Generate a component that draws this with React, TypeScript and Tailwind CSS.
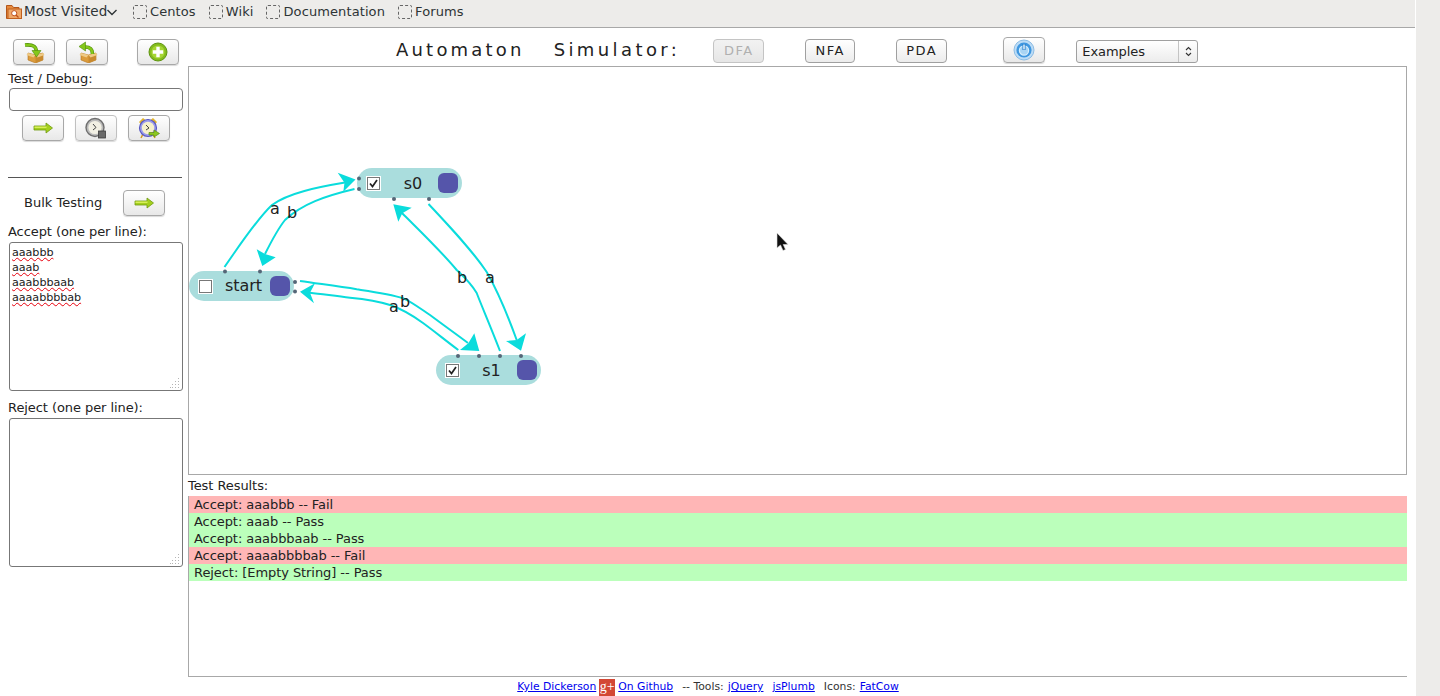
import type { ReactNode } from "react";

const bookmarks = ["Centos", "Wiki", "Documentation", "Forums"];

const results = [
  { text: "Accept: aaabbb -- Fail", pass: false },
  { text: "Accept: aaab -- Pass", pass: true },
  { text: "Accept: aaabbbaab -- Pass", pass: true },
  { text: "Accept: aaaabbbbab -- Fail", pass: false },
  { text: "Reject: [Empty String] -- Pass", pass: true },
];

const acceptLines = ["aaabbb", "aaab", "aaabbbaab", "aaaabbbbab"];

function IconButton({ children, className = "" }: { children: ReactNode; className?: string }) {
  return (
    <button className={`flex h-[26px] w-[42px] items-center justify-center rounded-[4px] border border-[#a8a8a8] bg-gradient-to-b from-white to-[#e8e8e8] shadow-[0_1px_1px_rgba(0,0,0,0.15)] ${className}`}>
      {children}
    </button>
  );
}

function TextButton({ label, className = "", disabled = false }: { label: string; className?: string; disabled?: boolean }) {
  return (
    <button
      className={`flex h-[24px] items-center justify-center rounded-[4px] border bg-gradient-to-b text-[13px] tracking-[1.5px] ${
        disabled ? "border-[#c4c4c4] from-[#f2f2f2] to-[#e6e6e6] text-[#b0b0b0]" : "border-[#a0a0a0] from-white to-[#ececec] text-[#222]"
      } ${className}`}
    >
      {label}
    </button>
  );
}

function BoxIcon({ flip = false }: { flip?: boolean }) {
  return (
    <svg width="22" height="22" viewBox="0 0 22 22">
      <path d="M5 12 L12.5 14 L20 12 L20 19 L12.5 22 L5 19 Z" fill="#dc9c3c" stroke="#b4741e" strokeWidth="0.6" />
      <path d="M12.5 14 L20 12 L20 19 L12.5 22 Z" fill="#c98a2e" />
      <path d="M5 12 L3.5 14 L10.5 16.5 L12.5 14 Z" fill="#eeca86" />
      <path d="M20 12 L21.5 14 L14.5 16.5 L12.5 14 Z" fill="#eeca86" />
      {flip ? (
        <g>
          <path d="M16.5 13 C16.5 8 14 6 9 6" fill="none" stroke="#4f8c0a" strokeWidth="3.6" />
          <path d="M16.5 13 C16.5 8 14 6 9 6" fill="none" stroke="#84c81a" strokeWidth="2.4" />
          <path d="M3 5.5 L9.5 1 L9.5 10 Z" fill="#84c81a" stroke="#4f8c0a" strokeWidth="0.6" />
        </g>
      ) : (
        <g>
          <path d="M2 4 C8 3.5 13 4 13.5 10" fill="none" stroke="#4f8c0a" strokeWidth="3.6" />
          <path d="M2 4 C8 3.5 13 4 13.5 10" fill="none" stroke="#84c81a" strokeWidth="2.4" />
          <path d="M13.5 16 L9 9.5 L18 9.5 Z" fill="#84c81a" stroke="#4f8c0a" strokeWidth="0.6" />
        </g>
      )}
    </svg>
  );
}

function PlusIcon() {
  return (
    <svg width="20" height="20" viewBox="0 0 20 20">
      <circle cx="10" cy="10" r="9" fill="#84bc1c" stroke="#5e9410" strokeWidth="1" />
      <circle cx="10" cy="10" r="6.6" fill="#a6d634" />
      <path d="M8.3 4.8 H11.7 V8.3 H15.2 V11.7 H11.7 V15.2 H8.3 V11.7 H4.8 V8.3 H8.3 Z" fill="#fff" />
    </svg>
  );
}

function ArrowIcon() {
  return (
    <svg width="20" height="12" viewBox="0 0 20 12">
      <path d="M1 4 H13 V1 L19.5 6 L13 11 V8 H1 Z" fill="#a4d01e" stroke="#6f9a10" strokeWidth="0.8" />
      <path d="M1.5 4.5 H13.5 V6 H1.5 Z" fill="#d8ee5a" />
    </svg>
  );
}

function StopClockIcon() {
  return (
    <svg width="22" height="22" viewBox="0 0 22 22">
      <circle cx="10" cy="10.5" r="9" fill="#bcbcbc" stroke="#6e6e6e" strokeWidth="1.4" />
      <circle cx="10" cy="10.5" r="6.6" fill="#f2f0e4" />
      <path d="M8 7 L11 10.5 L8 13" fill="none" stroke="#444" strokeWidth="1" />
      <rect x="13.5" y="14" width="7" height="7" fill="#6a6a6a" stroke="#3c3c3c" strokeWidth="0.8" />
    </svg>
  );
}

function AlarmClockIcon() {
  return (
    <svg width="22" height="22" viewBox="0 0 22 22">
      <path d="M1 5 L5 1 L7.5 3 L3 7.5 Z" fill="#e2b42a" />
      <path d="M19 5 L15 1 L12.5 3 L17 7.5 Z" fill="#e2b42a" />
      <path d="M4.5 18 L3 21 M15.5 18 L17 21" stroke="#d49a20" strokeWidth="1.5" />
      <circle cx="10" cy="11" r="8.5" fill="#9c9cec" stroke="#5858c0" strokeWidth="1.2" />
      <circle cx="10" cy="11" r="6.2" fill="#f6f0cc" />
      <path d="M8 8 L11 11 L8 13" fill="none" stroke="#444" strokeWidth="1" />
      <path d="M11 15.5 H16 V13 L21.5 16.5 L16 20 V18 H11 Z" fill="#8cc820" stroke="#5c8c10" strokeWidth="0.7" />
    </svg>
  );
}

function PowerIcon() {
  return (
    <svg width="22" height="22" viewBox="0 0 22 22">
      <circle cx="11" cy="11" r="10" fill="#bcdcf6" stroke="#8cbce4" strokeWidth="1" />
      <circle cx="11" cy="11" r="7.6" fill="#3f97e0" />
      <circle cx="11" cy="11.5" r="4.6" fill="#a8d4f4" stroke="#d8eefc" strokeWidth="1.2" />
      <path d="M11 5 V11" stroke="#1f78c8" strokeWidth="3" />
      <path d="M11 5.5 V10.5" stroke="#e8f4fd" strokeWidth="1.5" />
    </svg>
  );
}

function FolderIcon() {
  return (
    <svg width="16" height="17" viewBox="0 0 16 17">
      <path d="M0.5 2.5 H6 L7.5 4.5 H13 V15.5 H0.5 Z" fill="#e78a3c" stroke="#b3561a" strokeWidth="1" />
      <rect x="2" y="6" width="13.5" height="9.5" fill="#f0a868" stroke="#c0601e" strokeWidth="1" />
      <circle cx="8.2" cy="10.2" r="2.6" fill="#fff" stroke="#c0501a" strokeWidth="1" />
      <path d="M10 12 L12.5 14.5" stroke="#c0501a" strokeWidth="1.3" />
    </svg>
  );
}

function TextBox({ children }: { children?: ReactNode }) {
  return (
    <div className="relative ml-[9px] mt-[3px] h-[149px] w-[174px] rounded-[3px] border border-[#777] pl-[2px] pt-[2px] text-[11.2px] leading-[15px] text-[#222]">
      {children}
      <svg className="absolute bottom-[1px] right-[1px]" width="11" height="11" viewBox="0 0 11 11" fill="#b4b4b4">
        <rect x="8" y="0" width="1" height="1" />
        <rect x="5" y="3" width="1" height="1" />
        <rect x="8" y="3" width="1" height="1" />
        <rect x="2" y="6" width="1" height="1" />
        <rect x="5" y="6" width="1" height="1" />
        <rect x="8" y="6" width="1" height="1" />
        <rect x="0" y="9" width="1" height="1" />
        <rect x="2" y="9" width="1" height="1" />
        <rect x="5" y="9" width="1" height="1" />
        <rect x="8" y="9" width="1" height="1" />
      </svg>
    </div>
  );
}

function StateNode({ label, className, labelClass = "", checked = true }: { label: string; className: string; labelClass?: string; checked?: boolean }) {
  return (
    <div className={`absolute flex h-[30px] w-[105px] items-center rounded-[15px] bg-[#aadddd] pl-[10px] pr-[4px] ${className}`}>
      <div className="flex h-[13px] w-[13px] items-center justify-center border border-[#777] bg-white shadow-[0_0_0_1px_#fff]">
        {checked && (
          <svg width="11" height="11" viewBox="0 0 11 11">
            <path d="M2 5.5 L4.5 8.5 L9 2" fill="none" stroke="#222" strokeWidth="1.7" />
          </svg>
        )}
      </div>
      <span className={`flex-1 text-center text-[16px] text-[#222] ${labelClass}`}>{label}</span>
      <div className="h-[20px] w-[20px] rounded-[6px] bg-[#5555aa]" />
    </div>
  );
}

function EdgeLabel({ text, className }: { text: string; className: string }) {
  return <span className={`absolute text-[16px] leading-[16px] text-[#222] ${className}`}>{text}</span>;
}

function Diagram() {
  const dots = [
    [225, 271.5], [260, 271.5], [295, 282], [295, 291.5],
    [359, 178.5], [359, 189], [394, 199], [429, 199],
    [458, 356], [479, 356], [500, 356], [521, 356],
  ];
  return (
    <svg className="absolute left-0 top-0" width="1217" height="407" viewBox="189 67 1217 407">
      <g fill="none" stroke="#0adcdc" strokeWidth="2">
        <path d="M224.5 267 C240 245 256 220 272 205 C288 193 318 187 345 182.5" />
        <path d="M354.5 189 C325 196 302 204 285 220 C277 230 272 240 265 254" />
        <path d="M500 351 C490 325 482 307 476.7 293 C470 282 464 277 456.7 270 C440 250 420 231 402 213" />
        <path d="M428.5 204 C450 227 472 250 486.7 272 C497 290 508 316 516.7 340" />
        <path d="M300 281 C320 284 338 286 356.7 289.3 C375 292 390 294 403.3 298.3 C412 302 421 309 430 315 C442 324 456 334 468 343" />
        <path d="M458.3 350 C445 340 434 331 423 323 C412 315 402 309 390 305 C378 301 364 299 350 297.7 C335 296 322 294 310 292.7" />
      </g>
      <g fill="#0adcdc">
        <path d="M355.5 179.5 L337.7 172.7 L344.5 182.7 L343.3 191.7 Z" />
        <path d="M262.3 266 L256.7 249.3 L265 254 L275.7 257.3 Z" />
        <path d="M393.3 204.3 L398.3 221.7 L402.3 213.3 L411.7 207.7 Z" />
        <path d="M521 350.7 L506 341 L516.7 340 L526 333.3 Z" />
        <path d="M479.3 351 L460 350 L468.3 343.3 L474.3 333.3 Z" />
        <path d="M300 291.7 L315 283.3 L310 292.7 L314 303.3 Z" />
      </g>
      <g fill="#556677">
        {dots.map(([x, y]) => (
          <circle key={`${x}-${y}`} cx={x} cy={y} r="2" />
        ))}
      </g>
      {/* mouse pointer left in the shot */}
      <path d="M777 233 L777 248 L780.5 245 L783 250.5 L785.5 249.5 L783.2 244.5 L788 244.5 Z" fill="#111" stroke="#ddd" strokeWidth="0.6" />
    </svg>
  );
}

export default function App() {
  return (
    <div className="flex h-[696px] w-[1440px] overflow-hidden bg-white font-['DejaVu_Sans',sans-serif] text-[13px] tracking-[-0.07px] text-[#222]">
      <div className="flex w-[1415px] flex-col">
        {/* bookmarks toolbar */}
        <div className="flex h-[28px] items-center border-b border-[#a8a8a8] bg-[#edecea] pb-[4px] pl-[6px] text-[13px] tracking-[0.1px] text-[#2e3436]">
          <FolderIcon />
          <span className="ml-[2px] w-[82px] whitespace-nowrap text-[13.5px]">Most Visited</span>
          <svg className="mt-[1px]" width="12" height="12" viewBox="0 0 12 12">
            <path d="M1.5 4 L6 8.5 L10.5 4" fill="none" stroke="#2e3436" strokeWidth="1.4" />
          </svg>
          <div className="ml-[15px] flex gap-[13px]">
            {bookmarks.map((b) => (
              <div key={b} className="flex items-center">
                <div className="h-[14px] w-[14px] rounded-[2px] border border-dashed border-[#666]" />
                <span className="ml-[3px]">{b}</span>
              </div>
            ))}
          </div>
        </div>

        <div className="flex h-[649px]">
          {/* left panel */}
          <div className="w-[188px] shrink-0">
            <div className="ml-[13px] mt-[11px] flex">
              <IconButton><BoxIcon /></IconButton>
              <IconButton className="ml-[11px]"><BoxIcon flip /></IconButton>
              <IconButton className="ml-[29px]"><PlusIcon /></IconButton>
            </div>
            <div className="ml-[8px] mt-[6px] leading-[15px]">Test / Debug:</div>
            <div className="ml-[9px] mt-[2px] h-[23px] w-[174px] rounded-[4px] border border-[#777]" />
            <div className="ml-[22px] mt-[4px] flex gap-[11px]">
              <IconButton><ArrowIcon /></IconButton>
              <IconButton className="border-[#c0c0c0] from-[#f0f0f0] to-[#e4e4e4]"><StopClockIcon /></IconButton>
              <IconButton><AlarmClockIcon /></IconButton>
            </div>
            <div className="ml-[8px] mt-[36px] h-px w-[174px] bg-[#555]" />
            <div className="mt-[12px] flex items-center">
              <span className="ml-[24px] mt-[-1px] w-[99px] text-[13px] tracking-normal">Bulk Testing</span>
              <IconButton><ArrowIcon /></IconButton>
            </div>
            <div className="ml-[8px] mt-[8px] leading-[15px]">Accept (one per line):</div>
            <TextBox>
              {acceptLines.map((line) => (
                <div key={line}>
                  <span className="underline decoration-red-600 decoration-wavy decoration-1 underline-offset-1">{line}</span>
                </div>
              ))}
            </TextBox>
            <div className="ml-[8px] mt-[9px] leading-[15px]">Reject (one per line):</div>
            <TextBox />
          </div>

          {/* simulator */}
          <div className="flex w-[1219px] flex-col">
            <div className="flex h-[38px] items-end pb-[3px]">
              <div className="mb-[1px] ml-[208px] flex text-[18px] leading-[24px] text-[#222]">
                <span className="tracking-[3.2px]">Automaton</span>
                <span className="ml-[29px] tracking-[3.4px]">Simulator:</span>
              </div>
              <TextButton label="DFA" disabled className="ml-[33px] w-[51px]" />
              <TextButton label="NFA" className="ml-[41px] w-[50px]" />
              <TextButton label="PDA" className="ml-[41px] w-[51px]" />
              <IconButton className="ml-[56px]"><PowerIcon /></IconButton>
              <div className="ml-[31px] flex h-[23px] w-[122px] items-center rounded-[3px] border border-[#a0a0a0] bg-gradient-to-b from-white to-[#ececec] pl-[5px]">
                <span className="flex-1">Examples</span>
                <div className="flex h-full w-[19px] items-center justify-center border-l border-[#c4c4c4]">
                  <svg width="9" height="13" viewBox="0 0 9 13">
                    <path d="M2 5 L4.5 2.5 L7 5 M2 8 L4.5 10.5 L7 8" fill="none" stroke="#333" strokeWidth="1.1" />
                  </svg>
                </div>
              </div>
            </div>

            {/* canvas */}
            <div className="relative h-[409px] shrink-0 border border-[#a8a8a8]">
              <StateNode label="start" checked={false} labelClass="pl-[5px]" className="left-0 top-[204px]" />
              <StateNode label="s0" labelClass="pl-[8px] pt-[1px]" className="left-[168px] top-[101px]" />
              <StateNode label="s1" labelClass="pl-[7px] pt-[1px]" className="left-[247px] top-[288px]" />
              <Diagram />
              <EdgeLabel text="a" className="left-[81px] top-[134px]" />
              <EdgeLabel text="b" className="left-[98px] top-[138px]" />
              <EdgeLabel text="b" className="left-[268px] top-[203px]" />
              <EdgeLabel text="a" className="left-[296px] top-[203px]" />
              <EdgeLabel text="a" className="left-[200px] top-[232px]" />
              <EdgeLabel text="b" className="left-[211px] top-[227px]" />
            </div>

            <div className="mt-[3px] leading-[15px]">Test Results:</div>
            <div className="mt-[3px] flex-1 border-b border-l border-[#a8a8a8]">
              {results.map((r) => (
                <div key={r.text} className={`h-[17px] pl-[5px] leading-[17px] ${r.pass ? "bg-[#bbffbb]" : "bg-[#ffb6b6]"}`}>
                  {r.text}
                </div>
              ))}
            </div>
          </div>
        </div>

        {/* footer */}
        <div className="flex h-[19px] w-[1416px] items-center justify-center pt-[1px] text-[10.8px] tracking-normal text-[#333]">
          <a className="text-[#0000ee] underline">Kyle Dickerson</a>
          <span className="ml-[3px] flex h-[17px] w-[16px] items-center justify-center bg-[#d34836] font-['Liberation_Serif',serif] text-[14px] leading-[14px] text-white">g+</span>
          <a className="ml-[3px] text-[#0000ee] underline">On Github</a>
          <span className="ml-[9px]">-- Tools:</span>
          <a className="ml-[4px] text-[#0000ee] underline">jQuery</a>
          <a className="ml-[9px] text-[#0000ee] underline">jsPlumb</a>
          <span className="ml-[9px]">Icons:</span>
          <a className="ml-[4px] text-[#0000ee] underline">FatCow</a>
        </div>
      </div>
      <div className="ml-px w-[24px] bg-[#edecea]" />
    </div>
  );
}
